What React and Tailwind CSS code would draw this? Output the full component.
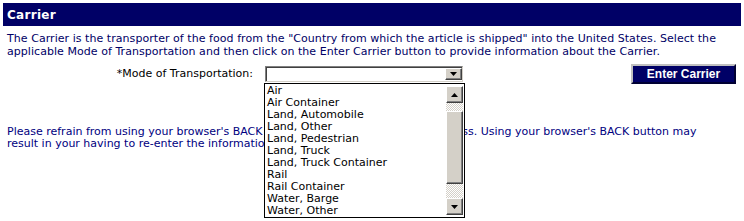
import React from "react";

const modes = [
  "Air",
  "Air Container",
  "Land, Automobile",
  "Land, Other",
  "Land, Pedestrian",
  "Land, Truck",
  "Land, Truck Container",
  "Rail",
  "Rail Container",
  "Water, Barge",
  "Water, Other",
];

function Arrow({ up }) {
  return (
    <svg width="7" height="4" viewBox="0 0 7 4">
      {up ? <path d="M3.5 0 L7 4 L0 4 Z" fill="#000" /> : <path d="M0 0 L7 0 L3.5 4 Z" fill="#000" />}
    </svg>
  );
}

function ScrollBtn({ up, className = "" }) {
  return (
    <div
      className={
        "flex w-[17px] items-center justify-center bg-[#d4d0c8] border border-t-white border-l-white border-b-[#404040] border-r-[#404040] shadow-[inset_-1px_-1px_0_#808080] " +
        className
      }
    >
      <Arrow up={up} />
    </div>
  );
}

export default function App() {
  return (
    <div className="relative h-[221px] w-[744px] overflow-hidden bg-white p-[3px] font-['DejaVu_Sans',Verdana,sans-serif] text-[11px]">
      <div className="flex h-[23px] w-[738px] items-center bg-[#000066] pl-[4px] text-[12px] font-bold tracking-[0.3px] text-white">
        Carrier
      </div>

      <p className="mt-[6px] whitespace-nowrap pl-[4px] leading-[13px] tracking-[0.05px] text-[#000066]">
        The Carrier is the transporter of the food from the "Country from which the article is shipped" into the United States. Select the
        <br />
        applicable Mode of Transportation and then click on the Enter Carrier button to provide information about the Carrier.
      </p>

      <div className="mt-[6px] flex h-[20px] items-center">
        <div className="w-[250px] text-right text-black">*Mode of Transportation:</div>

        <div className="relative ml-[12px]">
          <div className="flex h-[16px] w-[198px] items-center justify-end border border-t-[#808080] border-l-[#808080] border-b-[#d4d0c8] border-r-[#d4d0c8] bg-white shadow-[inset_1px_1px_0_#404040]">
            <ScrollBtn className="h-[12px]" />
          </div>

          <div className="absolute left-[-1px] top-[17px] z-10 flex h-[135px] w-[201px] border border-black bg-white">
            <ul className="flex-1 pt-[1px] pl-[2px] leading-[12px] text-black">
              {modes.map((m) => (
                <li key={m} className="h-[12px] whitespace-nowrap">
                  {m}
                </li>
              ))}
            </ul>
            <div className="flex w-[18px] flex-col py-[2px] pr-[1px]">
              <ScrollBtn up className="h-[17px]" />
              <div className="h-[8px] bg-[repeating-conic-gradient(#d4d0c8_0_25%,#fff_0_50%)] bg-[length:2px_2px]" />
              <div className="h-[73px] bg-[#d4d0c8] border border-t-white border-l-white border-b-[#404040] border-r-[#404040] shadow-[inset_-1px_-1px_0_#808080]" />
              <div className="flex-1 bg-[repeating-conic-gradient(#d4d0c8_0_25%,#fff_0_50%)] bg-[length:2px_2px]" />
              <ScrollBtn className="h-[17px]" />
            </div>
          </div>
        </div>

        <button className="ml-auto mr-[5px] h-[20px] w-[105px] border-2 border-t-[#c0c0c0] border-l-[#c0c0c0] border-b-[#000033] border-r-[#000033] bg-[#000066] font-['Liberation_Sans',Arial,sans-serif] text-[12px] font-bold leading-none text-white">
          Enter Carrier
        </button>
      </div>

      <p className="mt-[42px] whitespace-nowrap pl-[4px] leading-[12px] text-[#000080]">
        Please refrain from using your browser's BACK button during the submission process. Using your browser's BACK button may
        <br />
        result in your having to re-enter the information you have already provided.
      </p>
    </div>
  );
}
